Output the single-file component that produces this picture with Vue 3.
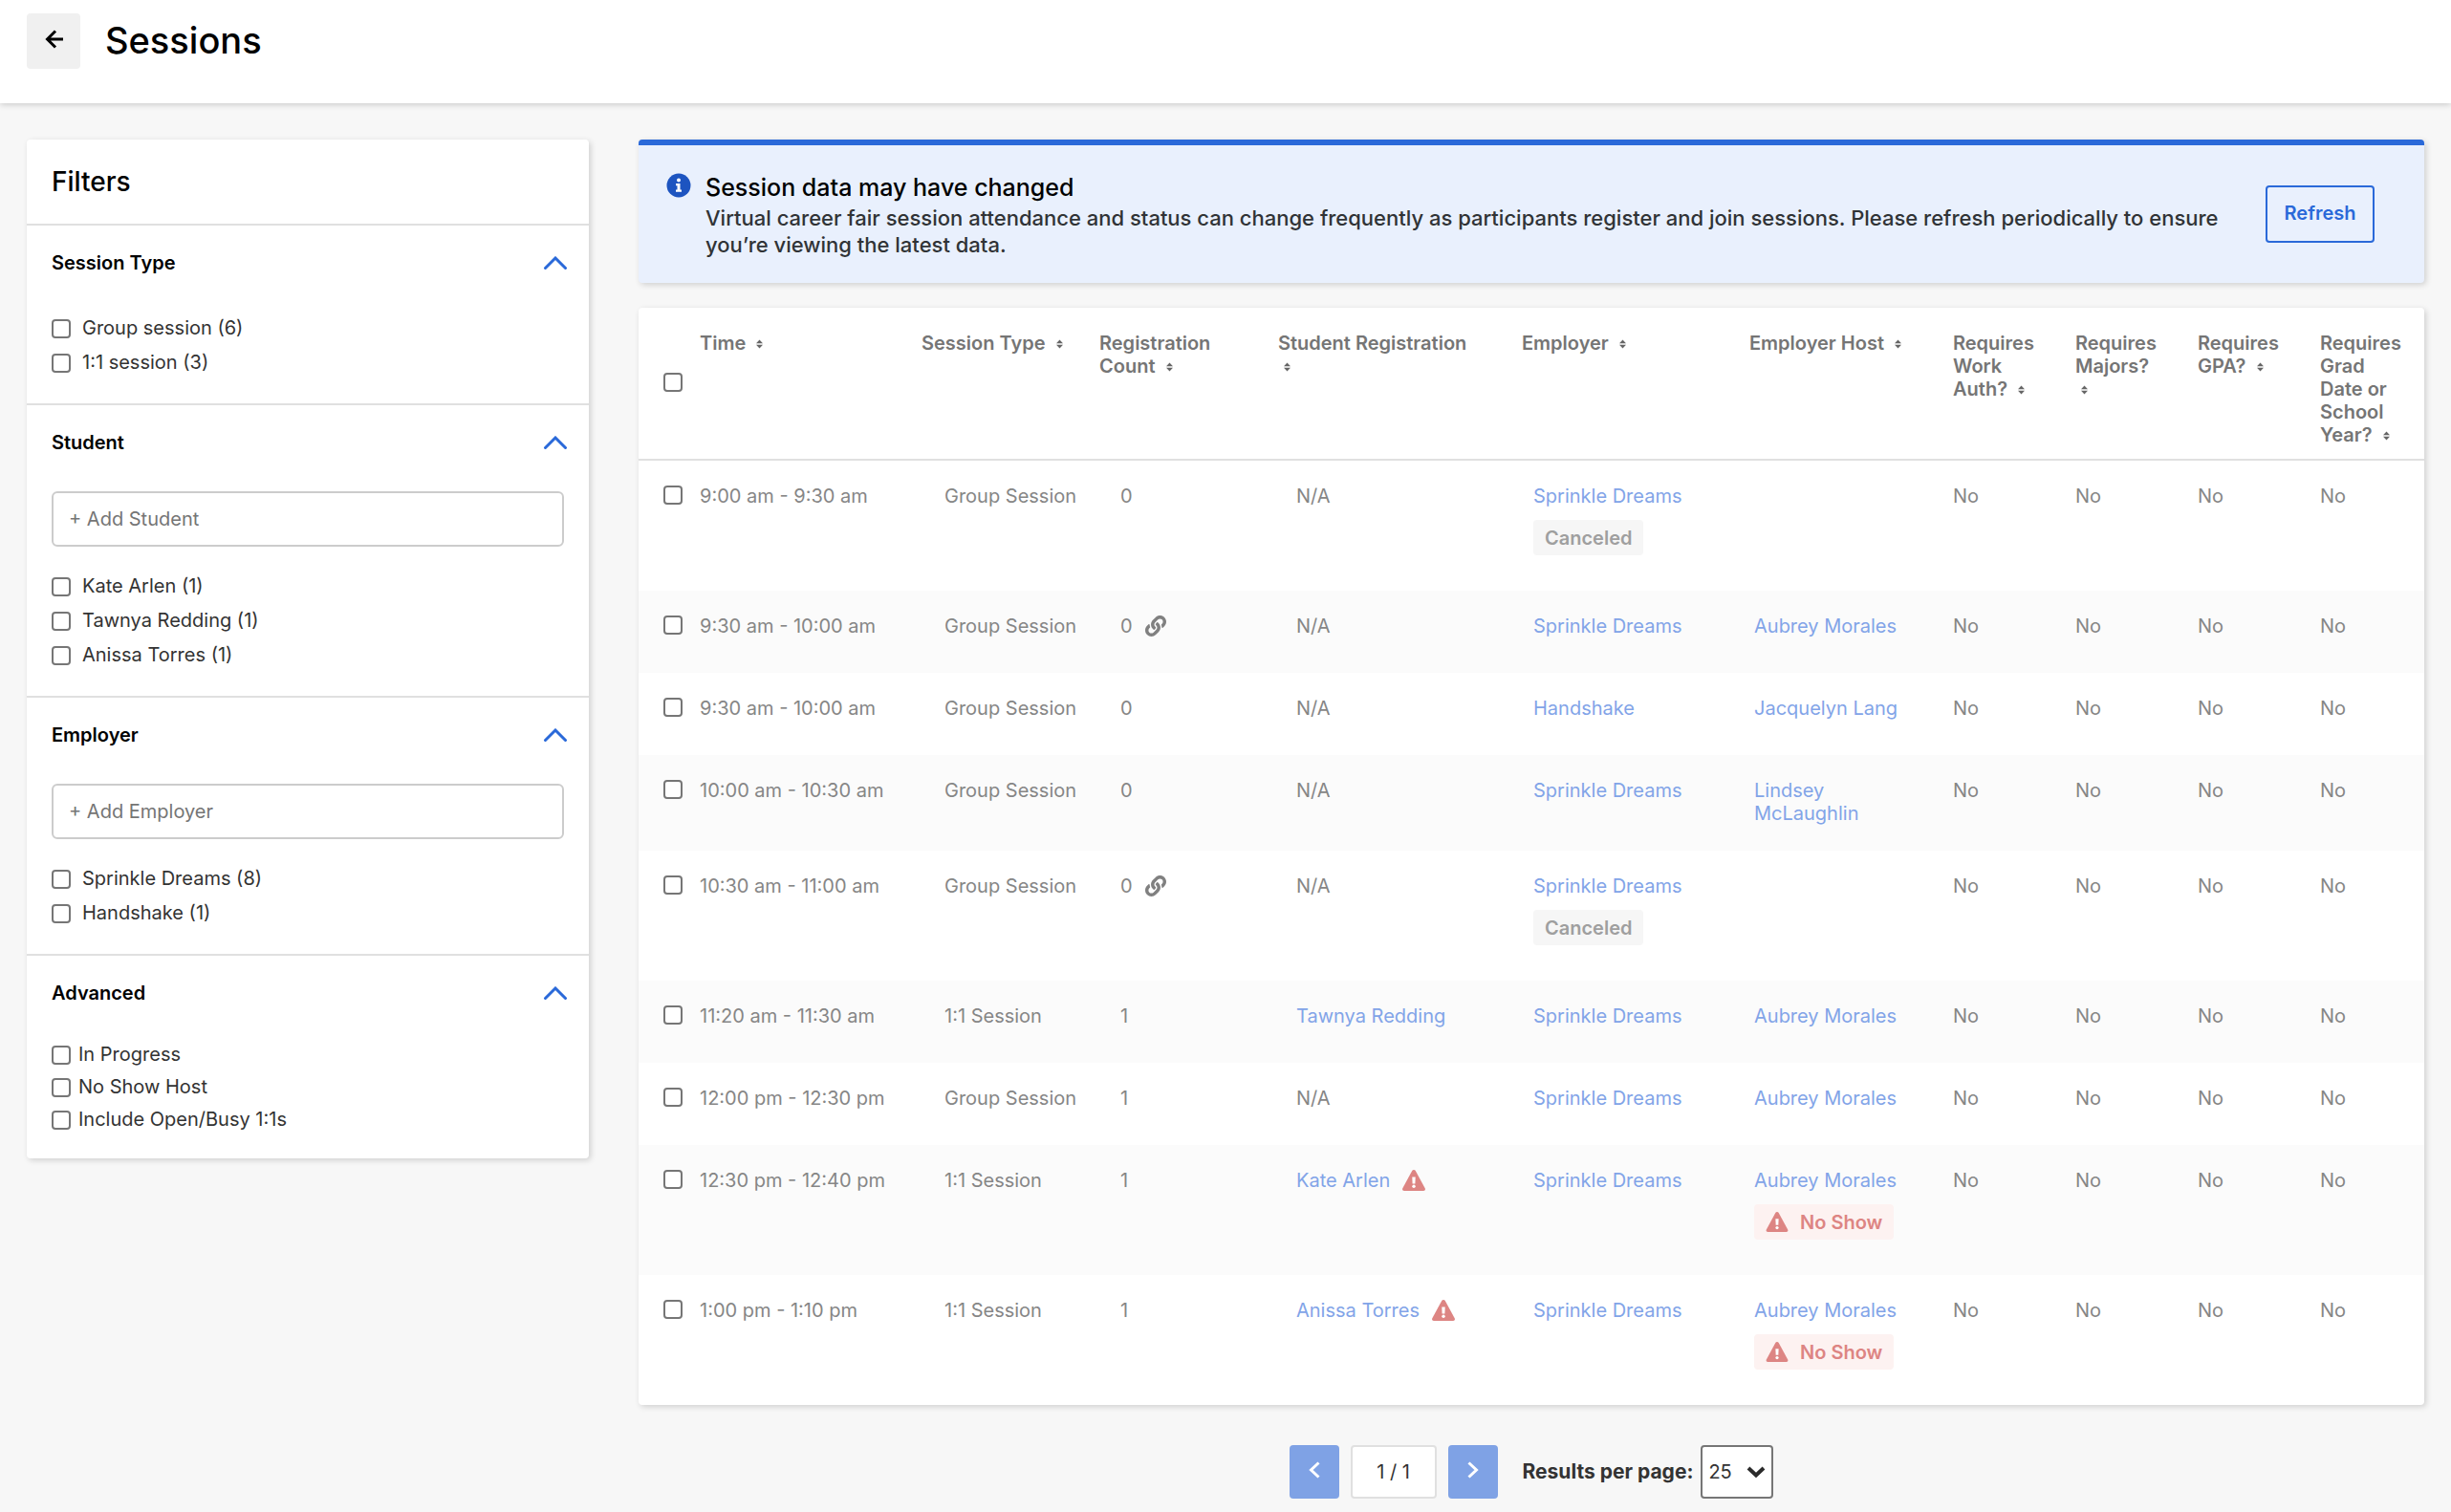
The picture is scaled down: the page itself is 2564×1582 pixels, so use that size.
<script setup>
import { ref } from 'vue'

const groups = [
  {
    id: 'type',
    title: 'Session Type',
    options: ['Group session (6)', '1:1 session (3)'],
  },
  {
    id: 'student',
    title: 'Student',
    placeholder: '+ Add Student',
    options: ['Kate Arlen (1)', 'Tawnya Redding (1)', 'Anissa Torres (1)'],
  },
  {
    id: 'employer',
    title: 'Employer',
    placeholder: '+ Add Employer',
    options: ['Sprinkle Dreams (8)', 'Handshake (1)'],
  },
  {
    id: 'advanced',
    title: 'Advanced',
    compact: true,
    options: ['In Progress', 'No Show Host', 'Include Open/Busy 1:1s'],
  },
]

const columns = [
  { key: 'time', label: 'Time' },
  { key: 'type', label: 'Session Type' },
  { key: 'count', label: 'Registration Count' },
  { key: 'student', label: 'Student Registration' },
  { key: 'employer', label: 'Employer' },
  { key: 'host', label: 'Employer Host' },
  { key: 'auth', label: 'Requires Work Auth?' },
  { key: 'majors', label: 'Requires Majors?' },
  { key: 'gpa', label: 'Requires GPA?' },
  { key: 'grad', label: 'Requires Grad Date or School Year?' },
]

const SD = 'Sprinkle Dreams'
const AM = 'Aubrey Morales'
const sessions = [
  { time: '9:00 am - 9:30 am', type: 'Group Session', count: 0, employer: SD, canceled: true },
  { time: '9:30 am - 10:00 am', type: 'Group Session', count: 0, linked: true, employer: SD, host: AM },
  { time: '9:30 am - 10:00 am', type: 'Group Session', count: 0, employer: 'Handshake', host: 'Jacquelyn Lang' },
  { time: '10:00 am - 10:30 am', type: 'Group Session', count: 0, employer: SD, host: 'Lindsey McLaughlin' },
  { time: '10:30 am - 11:00 am', type: 'Group Session', count: 0, linked: true, employer: SD, canceled: true },
  { time: '11:20 am - 11:30 am', type: '1:1 Session', count: 1, student: 'Tawnya Redding', employer: SD, host: AM },
  { time: '12:00 pm - 12:30 pm', type: 'Group Session', count: 1, employer: SD, host: AM },
  { time: '12:30 pm - 12:40 pm', type: '1:1 Session', count: 1, student: 'Kate Arlen', warn: true, employer: SD, host: AM, noShow: true },
  { time: '1:00 pm - 1:10 pm', type: '1:1 Session', count: 1, student: 'Anissa Torres', warn: true, employer: SD, host: AM, noShow: true },
]

const perPage = ref('25')
</script>

<template>
  <div class="page">
    <svg class="sprite" aria-hidden="true">
      <symbol id="warning" viewBox="0 0 24 22">
        <path d="M12 0c.8 0 1.400.400 1.800 1.100l9.900 18.200c.7 1.300-.1 2.700-1.600 2.700H1.900C.4 22-.4 20.600.3 19.300L10.200 1.100C10.600.4 11.200 0 12 0z" fill="currentColor" />
        <path d="M10.300 7.500h3.400l-.3 7h-2.800z" fill="#fff" />
        <circle cx="12" cy="17.300" r="1.700" fill="#fff" />
      </symbol>
    </svg>

    <header class="topbar">
      <button class="back" type="button" aria-label="Back">
        <svg width="20" height="20" viewBox="0 0 20 20" fill="none" stroke="#000" stroke-width="3">
          <path d="M20 10H4M12 1.500 3.500 10l8.500 8.500" />
        </svg>
      </button>
      <h1>Sessions</h1>
    </header>

    <div class="layout">
      <aside class="card filters">
        <h2>Filters</h2>
        <section v-for="g in groups" :key="g.id" :class="['group', { compact: g.compact }]">
          <button class="group-head" type="button" aria-expanded="true">
            <span>{{ g.title }}</span>
            <svg width="26" height="14" viewBox="0 0 26 14" fill="none" stroke="#2a69d9" stroke-width="3" stroke-linecap="round">
              <path d="M2.500 12.500 13 2l10.500 10.500" />
            </svg>
          </button>
          <div class="group-body">
            <input v-if="g.placeholder" class="add" type="text" :placeholder="g.placeholder" :aria-label="g.placeholder" />
            <label v-for="o in g.options" :key="o" class="option">
              <input type="checkbox" />
              <span>{{ o }}</span>
            </label>
          </div>
        </section>
      </aside>

      <main class="content">
        <div class="card notice">
          <svg class="info" width="26" height="26" viewBox="0 0 26 26">
            <circle cx="13" cy="13" r="12.500" fill="#1d54c0" />
            <circle cx="13" cy="7.500" r="2" fill="#fff" />
            <path d="M10 11h4.500v6.500H16v2.200h-6v-2.200h1.500v-4.300H10z" fill="#fff" />
          </svg>
          <div class="notice-text">
            <h3>Session data may have changed</h3>
            <p>Virtual career fair session attendance and status can change frequently as participants register and join sessions. Please refresh periodically to ensure you’re viewing the latest data.</p>
          </div>
          <button class="refresh" type="button">Refresh</button>
        </div>

        <div class="card">
          <table>
            <colgroup>
              <col class="w-check" />
              <col v-for="c in columns" :key="c.key" :class="'w-' + c.key" />
            </colgroup>
            <thead>
              <tr>
                <th class="check"><input type="checkbox" aria-label="Select all sessions" /></th>
                <th v-for="c in columns" :key="c.key" :class="c.key" scope="col">
                  {{ c.label }}
                  <svg class="sort" width="14" height="12" viewBox="0 0 14 12" fill="#666"><path d="M9.500 1.500 13 5.200H6zM9.500 10.500 6 6.800h7z" /></svg>
                </th>
              </tr>
            </thead>
            <tbody>
              <tr v-for="(s, i) in sessions" :key="i">
                <td class="check"><input type="checkbox" :aria-label="'Select ' + s.time" /></td>
                <td class="time">{{ s.time }}</td>
                <td class="type">{{ s.type }}</td>
                <td class="count">
                  <span class="inline">{{ s.count }}
                    <svg v-if="s.linked" width="22" height="22" viewBox="0 0 512 512" fill="#808080"><path d="M326.612 185.391c59.747 59.809 58.927 155.698.36 214.59-.11.12-.24.25-.36.37l-67.2 67.2c-59.27 59.27-155.699 59.262-214.96 0-59.27-59.26-59.27-155.7 0-214.96l37.106-37.106c9.84-9.84 26.786-3.3 27.294 10.606.648 17.722 3.826 35.527 9.69 52.721 1.986 5.822.567 12.262-3.783 16.612l-13.087 13.087c-28.026 28.026-28.905 73.66-1.155 101.96 28.024 28.579 74.086 28.749 102.325.51l67.2-67.19c28.191-28.191 28.073-73.757 0-101.83-3.701-3.694-7.429-6.564-10.341-8.569a16.037 16.037 0 0 1-6.947-12.606c-.396-10.567 3.348-21.456 11.698-29.806l21.054-21.055c5.521-5.521 14.182-6.199 20.584-1.731a152.482 152.482 0 0 1 20.522 17.197zM467.547 44.449c-59.261-59.262-155.69-59.27-214.96 0l-67.2 67.2c-.12.12-.25.25-.36.37-58.566 58.892-59.387 154.781.36 214.59a152.454 152.454 0 0 0 20.521 17.196c6.402 4.468 15.064 3.789 20.584-1.731l21.054-21.055c8.35-8.35 12.094-19.239 11.698-29.806a16.037 16.037 0 0 0-6.947-12.606c-2.912-2.005-6.64-4.875-10.341-8.569-28.073-28.073-28.191-73.639 0-101.83l67.2-67.19c28.239-28.239 74.3-28.069 102.325.51 27.75 28.3 26.872 73.934-1.155 101.96l-13.087 13.087c-4.35 4.35-5.769 10.79-3.783 16.612 5.864 17.194 9.042 34.999 9.69 52.721.509 13.906 17.454 20.446 27.294 10.606l37.106-37.106c59.271-59.259 59.271-155.699.001-214.959z" /></svg>
                  </span>
                </td>
                <td class="student">
                  <span v-if="s.student" class="inline">
                    <a href="#">{{ s.student }}</a>
                    <svg v-if="s.warn" class="warn" width="24" height="22"><use href="#warning" /></svg>
                  </span>
                  <template v-else>N/A</template>
                </td>
                <td class="employer">
                  <a href="#">{{ s.employer }}</a>
                  <div v-if="s.canceled" class="badge">Canceled</div>
                </td>
                <td class="host">
                  <a v-if="s.host" href="#">{{ s.host }}</a>
                  <div v-if="s.noShow" class="badge danger">
                    <svg width="24" height="21"><use href="#warning" /></svg>No Show
                  </div>
                </td>
                <td class="auth">No</td>
                <td class="majors">No</td>
                <td class="gpa">No</td>
                <td class="grad">No</td>
              </tr>
            </tbody>
          </table>
        </div>

        <nav class="pager" aria-label="Pagination">
          <button class="page-btn" type="button" aria-label="Previous page">
            <svg width="12" height="18" viewBox="0 0 12 18" fill="none" stroke="#fff" stroke-width="3"><path d="m10.500 1.500-8 7.500 8 7.500" /></svg>
          </button>
          <span class="page-num">1 / 1</span>
          <button class="page-btn" type="button" aria-label="Next page">
            <svg width="12" height="18" viewBox="0 0 12 18" fill="none" stroke="#fff" stroke-width="3"><path d="m1.500 1.500 8 7.500-8 7.500" /></svg>
          </button>
          <label class="per-label" for="per-page">Results per page:</label>
          <span class="select">
            <select id="per-page" v-model="perPage">
              <option>25</option>
              <option>50</option>
              <option>100</option>
            </select>
            <svg width="20" height="14" viewBox="0 0 20 14" fill="none" stroke="#2b2b2b" stroke-width="4"><path d="m2 3 8 7.500L18 3" /></svg>
          </span>
        </nav>
      </main>
    </div>
  </div>
</template>

<style>
body {
  margin: 0;
  background: #f7f7f7;
}
</style>

<style scoped>
.page {
  font: 400 20px/24px Inter, 'Liberation Sans', sans-serif;
  color: #333;
}
.page * {
  box-sizing: border-box;
}
h1, h2, h3, p {
  margin: 0;
  font-weight: 500;
}
svg {
  flex: none;
}
button, input, select {
  font: inherit;
  margin: 0;
}
button {
  padding: 0;
  cursor: pointer;
}
a {
  color: #82a4e8;
  text-decoration: none;
}
.sprite {
  position: absolute;
  width: 0;
  height: 0;
}
input[type='checkbox'] {
  appearance: none;
  flex: none;
  display: block;
  width: 20px;
  height: 20px;
  border: 2px solid #767676;
  border-radius: 4px;
  background: #fff;
}

.topbar {
  display: flex;
  align-items: flex-start;
  gap: 26px;
  height: 108px;
  padding: 14px 28px;
  background: #fff;
  box-shadow: 0 2px 6px rgba(0, 0, 0, 0.16);
}
.back {
  display: flex;
  align-items: center;
  justify-content: center;
  width: 56px;
  height: 58px;
  padding-bottom: 4px;
  border: 0;
  border-radius: 4px;
  background: #f0f0f0;
}
h1 {
  font-size: 38px;
  line-height: 56px;
  color: #000;
}

.layout {
  display: flex;
  align-items: flex-start;
  gap: 52px;
  padding: 38px 28px 14px;
}
.card {
  background: #fff;
  border-radius: 4px;
  box-shadow: 2px 2px 6px rgba(0, 0, 0, 0.16);
}
.filters {
  flex: none;
  width: 588px;
}
h2 {
  padding: 0 26px;
  font-size: 28px;
  line-height: 88px;
  color: #000;
}
.group {
  border-top: 2px solid #e0e0e0;
}
.group-head {
  display: flex;
  align-items: center;
  justify-content: space-between;
  width: 100%;
  height: 78px;
  padding: 0 22px 0 26px;
  border: 0;
  background: none;
  font-weight: 600;
  color: #000;
}
.group-body {
  padding: 12px 26px 24px;
}
.add {
  display: block;
  width: 100%;
  height: 58px;
  margin-bottom: 24px;
  padding: 0 16px;
  border: 2px solid #ccc;
  border-radius: 6px;
  background: #fff;
}
.add::placeholder {
  color: #757575;
  opacity: 1;
}
.option {
  display: flex;
  align-items: center;
  gap: 12px;
  height: 36px;
}
.option span {
  padding-bottom: 2px;
}
.compact .group-body {
  padding: 9px 26px 23px;
}
.compact .option {
  gap: 8px;
  height: 34px;
}

.content {
  flex: 1;
  min-width: 0;
}
.notice {
  display: flex;
  align-items: flex-start;
  height: 150px;
  margin-bottom: 26px;
  padding: 28px 52px 0 29px;
  border-top: 6px solid #2a69d9;
  background: #e9f0fd;
}
.info {
  margin: 1px 15px 0 0;
}
.notice-text {
  flex: 1;
  padding-right: 40px;
}
h3 {
  padding-bottom: 2px;
  font-size: 25px;
  line-height: 32px;
  color: #000;
}
p {
  font-size: 22px;
  line-height: 28px;
  color: #303336;
}
.refresh {
  width: 114px;
  height: 60px;
  margin-top: 14px;
  padding-bottom: 2px;
  border: 2px solid #2a69d9;
  border-radius: 4px;
  background: transparent;
  font-weight: 600;
  color: #2a69d9;
}

table {
  width: 100%;
  table-layout: fixed;
  border-collapse: collapse;
}
.w-check { width: 64px; }
.w-time { width: 232px; }
.w-type { width: 186px; }
.w-count { width: 187px; }
.w-student { width: 255px; }
.w-employer { width: 238px; }
.w-host { width: 213px; }
.w-auth, .w-majors, .w-gpa { width: 128px; }
.w-grad { width: 109px; }
th {
  padding: 25px 0 13px;
  border-bottom: 2px solid #e0e0e0;
  text-align: left;
  vertical-align: top;
  font-weight: 600;
  color: #757575;
}
th.check {
  padding: 0 0 2px 26px;
  vertical-align: middle;
}
th.count { padding-right: 30px; }
th.student { padding-right: 40px; }
th.auth, th.majors, th.gpa { padding-right: 34px; }
th.grad { padding-right: 14px; }
.sort {
  vertical-align: 0;
}
td {
  height: 86px;
  padding: 25px 0 27px;
  vertical-align: top;
  color: #868686;
}
tbody tr:nth-child(even) {
  background: #fbfbfb;
}
td.check {
  padding: 26px 0 0 26px;
}
td.type { padding-left: 24px; }
td.count { padding-left: 22px; }
td.student { padding-left: 19px; }
td.employer { padding-left: 12px; }
td.host { padding-left: 5px; padding-right: 40px; }
.inline {
  display: flex;
  align-items: center;
  gap: 13px;
  height: 24px;
}
.warn {
  color: #dd8583;
}
.badge {
  display: flex;
  align-items: center;
  gap: 12px;
  width: fit-content;
  height: 37px;
  margin: 13px 0 10px;
  padding: 0 12px;
  border-radius: 4px;
  background: #f6f6f6;
  font-weight: 600;
  color: #9f9f9f;
  white-space: nowrap;
}
.danger {
  background: #fdf2f1;
  color: #dd8583;
}

.pager {
  display: flex;
  align-items: center;
  justify-content: center;
  gap: 12px;
  margin-top: 42px;
}
.page-btn {
  display: flex;
  align-items: center;
  justify-content: center;
  width: 52px;
  height: 56px;
  padding-bottom: 4px;
  border: 0;
  border-radius: 4px;
  background: #7fa2e5;
}
.page-num {
  width: 90px;
  height: 56px;
  border: 2px solid #e0e0e0;
  border-radius: 4px;
  background: #fff;
  line-height: 52px;
  text-align: center;
}
.per-label {
  margin: 0 -4px 0 14px;
  font-size: 21px;
  font-weight: 700;
}
.select {
  display: grid;
  align-items: center;
}
.select > * {
  grid-area: 1 / 1;
}
.select svg {
  justify-self: end;
  margin-right: 8px;
  pointer-events: none;
}
select {
  appearance: none;
  width: 76px;
  height: 56px;
  padding: 0 0 0 6px;
  border: 2px solid #767676;
  border-radius: 4px;
  background: #fff;
  color: #333;
}
</style>
